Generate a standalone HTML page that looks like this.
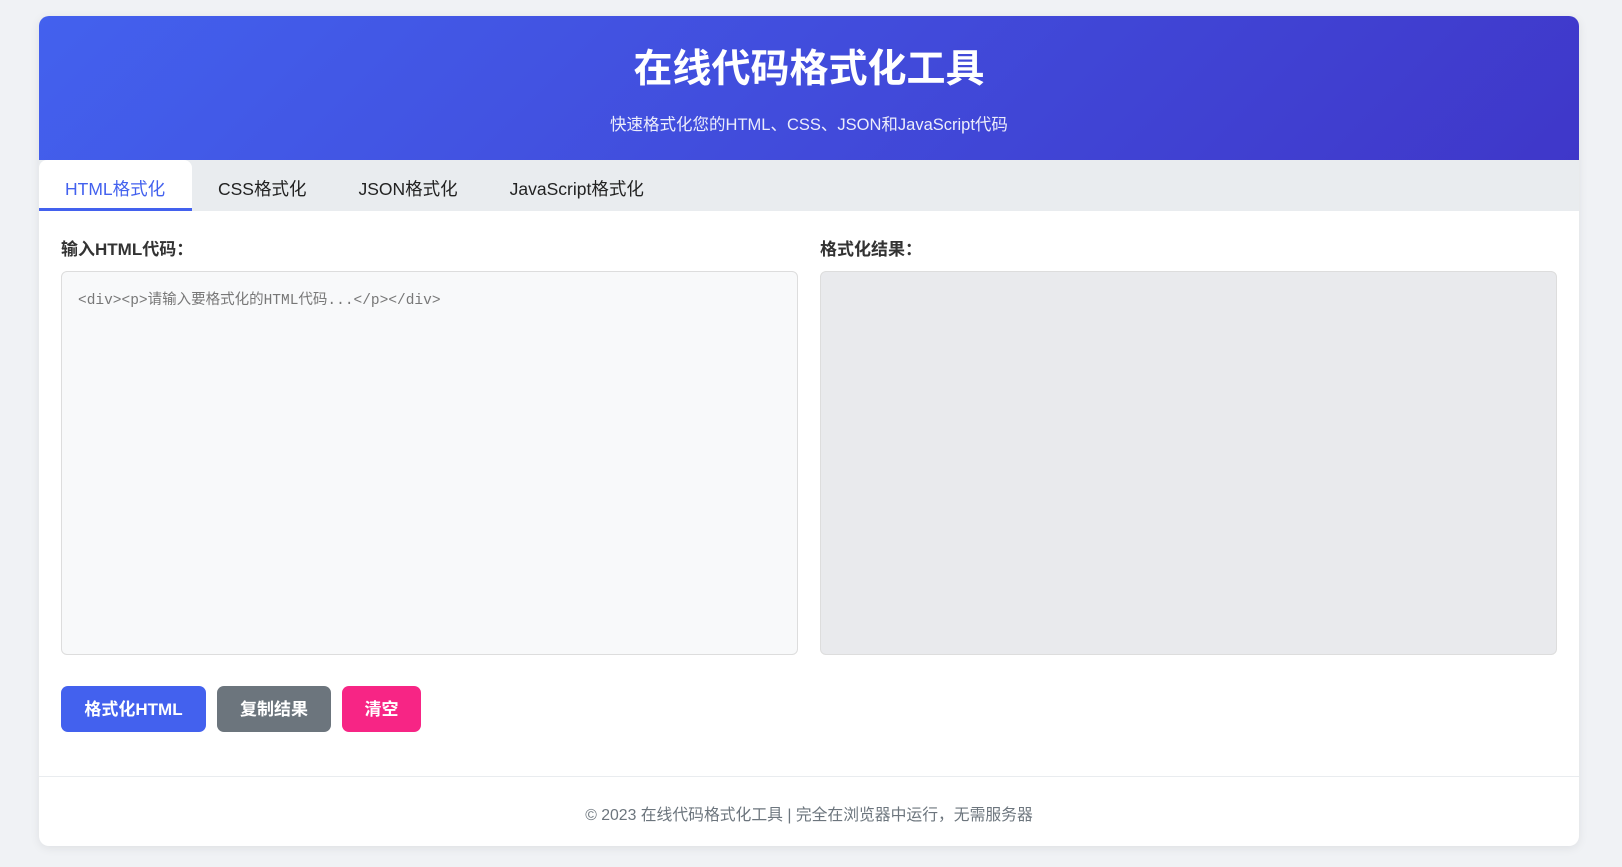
<!DOCTYPE html>
<html><head><meta charset="utf-8">
<style>
*{box-sizing:border-box;margin:0;padding:0}
body{width:1622px;height:867px;background:#f0f2f5;font-family:"Liberation Sans","Noto Sans CJK SC",sans-serif;position:relative;overflow:hidden}
.c{position:absolute;left:39px;top:16px;width:1540px;height:830px;background:#fff;border-radius:10px;box-shadow:0 2px 10px rgba(0,0,0,.08);overflow:hidden}
.h{height:144px;background:linear-gradient(135deg,#4361ee,#3f37c9);color:#fff;text-align:center}
.h h1{font-size:39px;font-weight:bold;padding-top:31px;line-height:46px}
.h p{font-size:16.5px;margin-top:20px;opacity:.9;line-height:24px}
.tabs{height:51px;background:#e9ecef;display:flex}
.tab{height:51px;line-height:50px;padding-top:4px;font-size:17.5px;color:#222;padding-left:26px;padding-right:26px}
.tab.a{background:#fff;color:#4361ee;border-bottom:3px solid #4361ee;width:153px;border-radius:8px 8px 0 0}
.lbl{position:absolute;top:219px;font-size:17px;font-weight:bold;color:#333}
.ta{position:absolute;top:255px;height:384px;width:737px;border:1px solid #ddd;border-radius:6px}
.ph{font-family:"Liberation Mono","Noto Sans CJK SC",monospace;font-size:14.5px;color:#777;padding:16px 16px}
.b{position:absolute;top:670px;height:46px;border-radius:7px;color:#fff;font-size:17px;font-weight:bold;text-align:center;line-height:48px}
.f{position:absolute;top:760px;left:0;right:0;border-top:1px solid #e9ecef;text-align:center;font-size:15.8px;color:#6c757d;padding-top:25px}
</style></head><body>
<div class="c">
<div class="h"><h1>在线代码格式化工具</h1><p>快速格式化您的HTML、CSS、JSON和JavaScript代码</p></div>
<div class="tabs"><div class="tab a">HTML格式化</div><div class="tab">CSS格式化</div><div class="tab">JSON格式化</div><div class="tab">JavaScript格式化</div></div>
<div class="lbl" style="left:22px">输入HTML代码：</div>
<div class="lbl" style="left:781px">格式化结果：</div>
<div class="ta" style="left:22px;background:#f8f9fa"><div class="ph">&lt;div&gt;&lt;p&gt;请输入要格式化的HTML代码...&lt;/p&gt;&lt;/div&gt;</div></div>
<div class="ta" style="left:781px;background:#e9eaed"></div>
<div class="b" style="left:22px;width:145px;background:#4361ee">格式化HTML</div>
<div class="b" style="left:178px;width:114px;background:#6c757d">复制结果</div>
<div class="b" style="left:303px;width:79px;background:#f72585">清空</div>
<div class="f">© 2023 在线代码格式化工具 | 完全在浏览器中运行，无需服务器</div>
</div>
</body></html>
